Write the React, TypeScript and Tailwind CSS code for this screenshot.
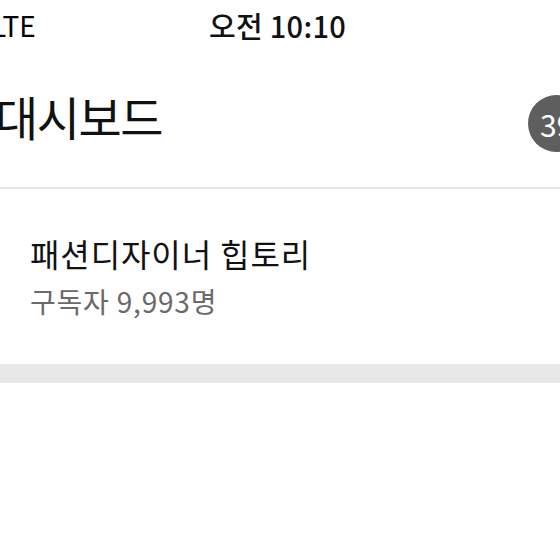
import React from "react";

export default function App() {
  const font = { fontFamily: '"Noto Sans CJK KR", "Noto Sans", sans-serif' };
  return (
    <div className="w-[560px] h-[560px] overflow-hidden bg-white relative" style={font}>
      <div className="h-[50px] flex items-center relative">
        <span className="ml-[-9px] text-[28px] leading-none text-black">LTE</span>
        <span className="absolute left-[209px] top-[8px] text-[29px] font-medium leading-none text-[#111] tracking-[0.3px] mt-[3px]">오전 10:10</span>
      </div>
      <div className="h-[137px] flex items-center relative">
        <h1 className="ml-[-5px] mt-[-6px] text-[47px] font-normal leading-none text-[#111] tracking-[-1.5px]">대시보드</h1>
        <div className="absolute left-[528px] top-[45px] w-[57px] h-[57px] rounded-full bg-[#5e5e5e] flex items-center pl-[12px]">
          <span className="text-white text-[30px] leading-none">39</span>
        </div>
      </div>
      <div className="h-[2px] bg-[#e4e4e4]" />
      <div className="h-[175px] pl-[30px] pt-[48px] flex flex-col">
        <div className="text-[32px] leading-none text-[#111] tracking-[0.9px]">패션디자이너 힙토리</div>
        <div className="mt-[18px] text-[28px] leading-none text-[#6a6a6a] tracking-[0.8px]">구독자 9,993명</div>
      </div>
      <div className="h-[19px] bg-[#e8e8e8]" />
    </div>
  );
}
